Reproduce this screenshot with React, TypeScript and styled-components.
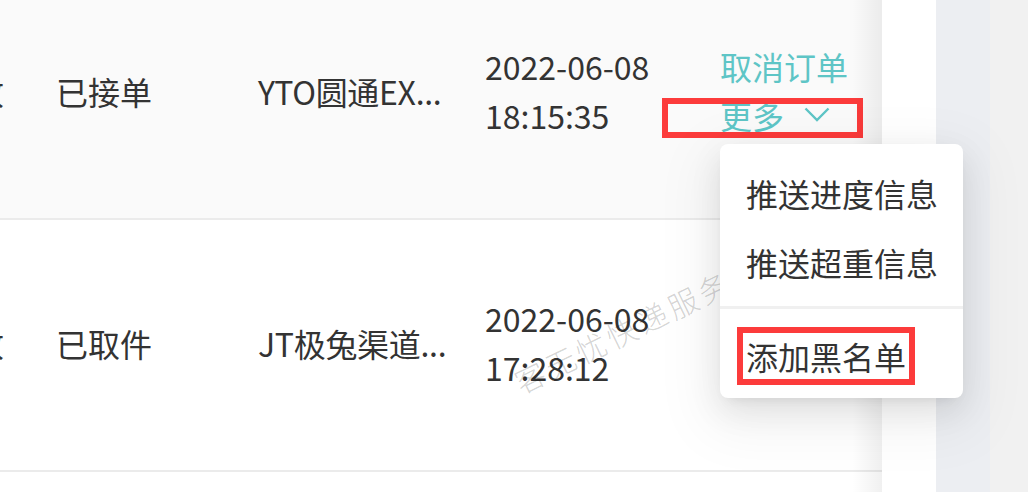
import React from "react";
import styled, { createGlobalStyle } from "styled-components";

interface Order {
  prefix: string;
  status: string;
  carrier: string;
  date: string;
  time: string;
  hovered?: boolean;
}

const orders: Order[] = [
  { prefix: "待收", status: "已接单", carrier: "YTO圆通EX...", date: "2022-06-08", time: "18:15:35", hovered: true },
  { prefix: "待收", status: "已取件", carrier: "JT极兔渠道...", date: "2022-06-08", time: "17:28:12" },
  { prefix: "待收", status: "已签收", carrier: "STO申通快递...", date: "2022-06-08", time: "16:02:47" },
];

const menuItems = ["推送进度信息", "推送超重信息"];

const GlobalStyle = createGlobalStyle`
  html, body {
    margin: 0;
    padding: 0;
  }
  body {
    font-family: "Noto Sans CJK SC", "Noto Sans", sans-serif;
    color: #333;
  }
`;

const Frame = styled.div`
  position: relative;
  display: flex;
  width: 1028px;
  height: 492px;
  overflow: hidden;
  background: #f1f1f1;
`;

const TableArea = styled.div`
  position: relative;
  width: 882px;
  flex-shrink: 0;
  overflow: hidden;
  background: #fff;

  &::after {
    content: "";
    position: absolute;
    top: 0;
    right: 0;
    bottom: 0;
    width: 30px;
    background: linear-gradient(to right, rgba(0, 0, 0, 0), rgba(0, 0, 0, 0.06));
    pointer-events: none;
  }
`;

const Gutter = styled.div`
  width: 54px;
  flex-shrink: 0;
  background: #fff;
`;

const Track = styled.div`
  width: 54px;
  flex-shrink: 0;
  background: #eceef2;
`;

const Body = styled.div`
  margin-top: -32px;
  margin-left: -202px;
`;

const Row = styled.div<{ $hovered?: boolean }>`
  display: grid;
  grid-template-columns: 226px 202px 227px 235px 194px;
  height: 252px;
  box-sizing: border-box;
  padding-bottom: 4px;
  border-bottom: 2px solid #ebebeb;
  background: ${(p) => (p.$hovered ? "#fafafa" : "#fff")};
`;

const Cell = styled.div<{ $align?: "left" | "right" }>`
  display: flex;
  flex-direction: column;
  justify-content: center;
  padding: 0 ${(p) => (p.$align === "right" ? "20px" : "32px")} 0 32px;
  text-align: ${(p) => p.$align ?? "left"};
  font-size: 32px;
  line-height: 49px;
  white-space: nowrap;
`;

const Carrier = styled.span`
  letter-spacing: -0.3px;
`;

const ActionLink = styled.div`
  color: #5ec5c6;
  cursor: pointer;
`;

const MoreLine = styled(ActionLink)`
  position: relative;
  display: flex;
  align-items: center;
  gap: 20px;
`;

const Chevron = styled.svg`
  width: 26px;
  height: 15px;
  margin-top: -3px;
`;

const MarkBox = styled.div`
  position: absolute;
  left: -58px;
  top: 7px;
  width: 201px;
  height: 40px;
  box-sizing: border-box;
  border: 6px solid #fc3b3b;
  pointer-events: none;
`;

const Watermark = styled.span`
  position: absolute;
  left: 516px;
  top: 366px;
  font-size: 30px;
  line-height: 34px;
  letter-spacing: 4px;
  font-weight: 300;
  color: rgba(0, 0, 0, 0.18);
  white-space: nowrap;
  transform-origin: 0 50%;
  transform: rotate(-26deg);
  pointer-events: none;
`;

const Dropdown = styled.div`
  position: absolute;
  left: 720px;
  top: 144px;
  width: 243px;
  box-sizing: border-box;
  padding: 14px 0 8px;
  background: #fff;
  border-radius: 8px;
  box-shadow: 0 6px 12px -8px rgba(0, 0, 0, 0.12), 0 12px 32px rgba(0, 0, 0, 0.09),
    0 18px 56px 16px rgba(0, 0, 0, 0.05);
  z-index: 10;
`;

const MenuItem = styled.div`
  display: flex;
  align-items: center;
  height: 69px;
  padding: 0 26px;
  font-size: 32px;
  color: #333;
  white-space: nowrap;
`;

const Divider = styled.div`
  height: 3px;
  margin: 10px 0 12px;
  background: #f0f0f0;
`;

const MarkedLabel = styled.span`
  display: inline-block;
  line-height: 40px;
  outline: 6px solid #fc3b3b;
  outline-offset: 3px;
`;

const OrderRow = ({ order, marked }: { order: Order; marked?: boolean }) => (
  <Row $hovered={order.hovered}>
    <Cell $align="right">{order.prefix}</Cell>
    <Cell>{order.status}</Cell>
    <Cell>
      <Carrier>{order.carrier}</Carrier>
    </Cell>
    <Cell>
      <div>{order.date}</div>
      <div>{order.time}</div>
    </Cell>
    <Cell>
      <ActionLink>取消订单</ActionLink>
      <MoreLine>
        <span>更多</span>
        <Chevron viewBox="0 0 26 15">
          <path d="M1.5 1.5 L13 13 L24.5 1.5" fill="none" stroke="#5ec5c6" strokeWidth="2.4" />
        </Chevron>
        {marked && <MarkBox />}
      </MoreLine>
    </Cell>
  </Row>
);

export default function App() {
  return (
    <>
      <GlobalStyle />
      <Frame>
        <TableArea>
          <Body>
            {orders.map((o, i) => (
              <OrderRow key={i} order={o} marked={i === 0} />
            ))}
          </Body>
          <Watermark>客无忧快递服务</Watermark>
        </TableArea>
        <Gutter />
        <Track />
        <Dropdown>
          {menuItems.map((m) => (
            <MenuItem key={m}>{m}</MenuItem>
          ))}
          <Divider />
          <MenuItem>
            <MarkedLabel>添加黑名单</MarkedLabel>
          </MenuItem>
        </Dropdown>
      </Frame>
    </>
  );
}
